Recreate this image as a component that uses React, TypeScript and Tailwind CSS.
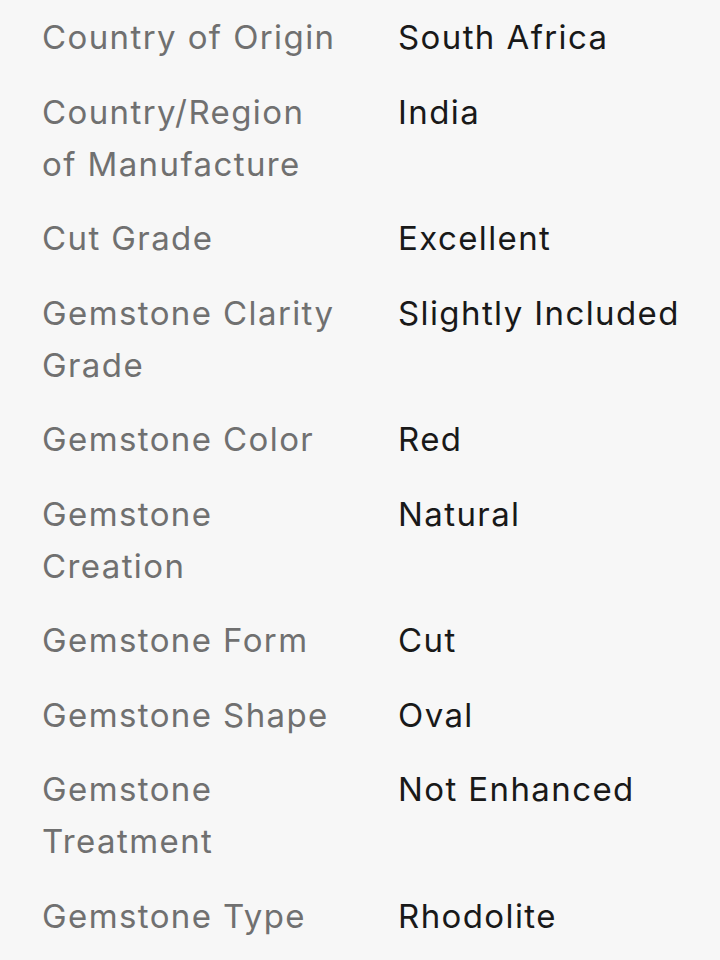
import React from "react";

const rows: [string, string][] = [
  ["Country of Origin", "South Africa"],
  ["Country/Region of Manufacture", "India"],
  ["Cut Grade", "Excellent"],
  ["Gemstone Clarity Grade", "Slightly Included"],
  ["Gemstone Color", "Red"],
  ["Gemstone Creation", "Natural"],
  ["Gemstone Form", "Cut"],
  ["Gemstone Shape", "Oval"],
  ["Gemstone Treatment", "Not Enhanced"],
  ["Gemstone Type", "Rhodolite"],
];

export default function App() {
  return (
    <div
      className="w-[720px] h-[960px] bg-[#f7f7f7] overflow-hidden pt-[11px] pl-[42px]"
      style={{ fontFamily: "Inter, 'Noto Sans', sans-serif" }}
    >
      <dl className="grid grid-cols-[298px_1fr] gap-x-[58px] gap-y-[22.5px] text-[33px] leading-[52px] tracking-[1.4px]">
        {rows.map(([k, v]) => (
          <React.Fragment key={k}>
            <dt className="text-[#707070]">{k}</dt>
            <dd className="text-[#191919]">{v}</dd>
          </React.Fragment>
        ))}
      </dl>
    </div>
  );
}
